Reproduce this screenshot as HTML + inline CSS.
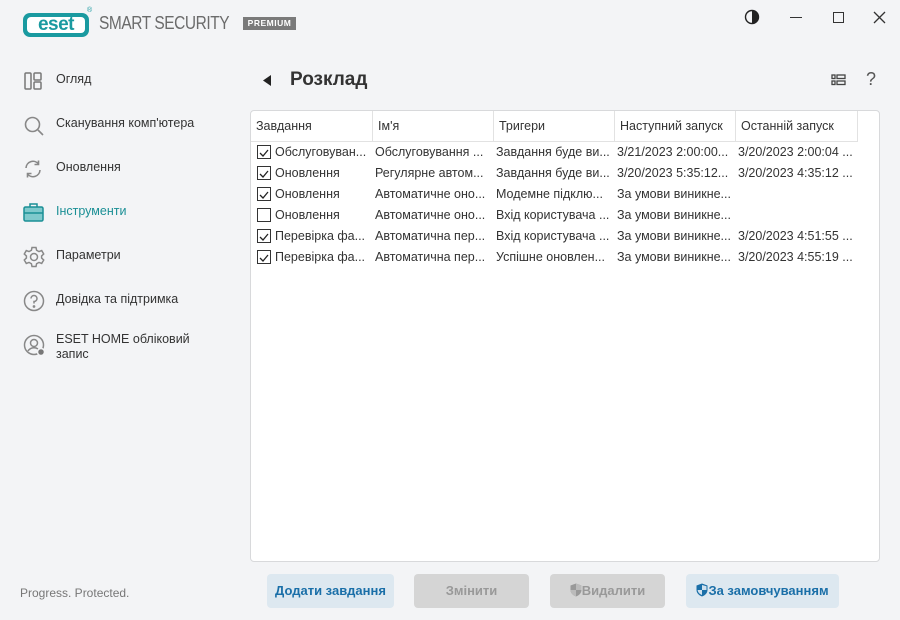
<!DOCTYPE html>
<html><head><meta charset="utf-8"><style>
*{margin:0;padding:0;box-sizing:border-box}
body{width:900px;height:620px;background:#f3f4f6;font-family:"Liberation Sans","DejaVu Sans",sans-serif;position:relative;overflow:hidden;color:#2b2b2b}
.a{position:absolute}
.nav{position:absolute;left:56px;font-size:12.5px;color:#333}
.ic{position:absolute;left:23px}
.panel{position:absolute;left:250px;top:110px;width:630px;height:452px;background:#fff;border:1px solid #d8d9db;border-radius:4px;overflow:hidden}
.hd{position:absolute;top:0;height:31px;border-right:1px solid #e2e2e2;border-bottom:1px solid #e2e2e2;font-size:12.5px;line-height:31px;padding-left:5px;color:#333}
.c{position:absolute;font-size:12.5px;white-space:nowrap;overflow:hidden;color:#333;height:18px;line-height:18px}
.cb{position:absolute;left:7px;width:14px;height:14px;border:1px solid #333;background:#fff}
.btn{position:absolute;top:574px;height:34px;border-radius:4px;font-size:13px;font-weight:bold;line-height:34px;text-align:center}
</style></head><body>
<!-- logo -->
<div class="a" style="left:23px;top:13px;width:66px;height:24px;border-radius:7px;background:#1a9aa0;"></div>
<div class="a" style="left:27px;top:17px;width:58px;height:16px;border-radius:4px;background:#fff;"></div>
<div class="a" style="left:27px;top:13px;width:58px;height:24px;color:#1a9aa0;font-weight:bold;font-size:19px;line-height:24px;text-align:center;letter-spacing:-0.5px">eset</div>
<div class="a" style="left:87px;top:7px;font-size:7px;color:#1a9aa0">®</div>
<div class="a" style="left:99px;top:13px;font-size:18px;color:#6b6b6b;letter-spacing:-0.5px;white-space:nowrap;transform:scaleX(0.86);transform-origin:left">SMART SECURITY</div>
<div class="a" style="left:243px;top:17px;width:53px;height:13px;background:#7a7a7a;color:#fff;font-size:8.5px;font-weight:bold;line-height:13px;text-align:center;letter-spacing:0.5px">PREMIUM</div>
<!-- window controls -->
<svg class="a" style="left:744px;top:9px" width="16" height="16"><circle cx="8" cy="8" r="6.5" fill="none" stroke="#222" stroke-width="1.4"/><path d="M8 1.5A6.5 6.5 0 0 1 8 14.5Z" fill="#222"/></svg>
<div class="a" style="left:790px;top:17px;width:12px;height:1.3px;background:#333"></div>
<div class="a" style="left:833px;top:12px;width:11px;height:11px;border:1.3px solid #333"></div>
<svg class="a" style="left:873px;top:11px" width="13" height="13"><path d="M1 1L12 12M12 1L1 12" stroke="#333" stroke-width="1.3"/></svg>
<!-- sidebar -->
<svg class="ic" style="top:71px" width="20" height="20" fill="none" stroke="#777" stroke-width="1.5"><rect x="2" y="2" width="6" height="16" rx="1"/><rect x="11" y="2" width="7" height="7" rx="1"/><rect x="11" y="11" width="7" height="7" rx="1"/></svg>
<div class="nav" style="top:72px">Огляд</div>
<svg class="ic" style="top:115px" width="22" height="22" fill="none" stroke="#888" stroke-width="1.6"><circle cx="9.5" cy="9.5" r="7"/><path d="M15 15L20 20"/></svg>
<div class="nav" style="top:116px">Сканування комп'ютера</div>
<svg class="ic" style="top:159px" width="20" height="20" fill="none" stroke="#888" stroke-width="1.6"><path d="M3 9A7 7 0 0 1 15.5 5M17 11A7 7 0 0 1 4.5 15"/><path d="M15.5 1.5V5.5H11.5M4.5 18.5V14.5H8.5"/></svg>
<div class="nav" style="top:160px">Оновлення</div>
<svg class="ic" style="top:202px" width="22" height="20"><rect x="1" y="5" width="19" height="14" rx="1.5" fill="#7fc9cc" stroke="#1a8f95" stroke-width="1.5"/><path d="M7 5V2H14V5" fill="none" stroke="#1a8f95" stroke-width="1.5"/><path d="M1 11H20" stroke="#1a8f95" stroke-width="1.5"/></svg>
<div class="nav" style="top:204px;color:#1a8f95">Інструменти</div>
<svg class="ic" style="top:246px" width="22" height="22" fill="none" stroke="#888" stroke-width="1.5"><path d="M9 1.5H13L13.6 4.3L16 5.6L18.7 4.6L20.7 8L18.6 10V12L20.7 14L18.7 17.4L16 16.4L13.6 17.7L13 20.5H9L8.4 17.7L6 16.4L3.3 17.4L1.3 14L3.4 12V10L1.3 8L3.3 4.6L6 5.6L8.4 4.3Z"/><circle cx="11" cy="11" r="3.5"/></svg>
<div class="nav" style="top:248px">Параметри</div>
<svg class="ic" style="top:290px" width="22" height="22" fill="none" stroke="#888" stroke-width="1.5"><circle cx="11" cy="11" r="9.5"/><path d="M8 8.5A3 3 0 1 1 11 11.5V13.5"/><circle cx="11" cy="16.5" r="0.6" fill="#888"/></svg>
<div class="nav" style="top:292px">Довідка та підтримка</div>
<svg class="ic" style="top:334px" width="24" height="24" fill="none" stroke="#888" stroke-width="1.5"><circle cx="11" cy="11" r="9.5"/><circle cx="11" cy="9" r="3.5"/><path d="M5 17A7 7 0 0 1 15 15"/><circle cx="18" cy="18" r="3.5" fill="#777" stroke="#f3f4f6"/></svg>
<div class="nav" style="top:332px;line-height:15px">ESET HOME обліковий<br>запис</div>
<div class="a" style="left:20px;top:586px;font-size:12px;color:#777">Progress. Protected.</div>
<!-- title -->
<svg class="a" style="left:263px;top:75px" width="9" height="11"><path d="M8 0V11L0 5.5Z" fill="#222"/></svg>
<div class="a" style="left:290px;top:69px;font-size:19px;font-weight:bold;color:#333">Розклад</div>
<svg class="a" style="left:831px;top:74px" width="15" height="12" fill="none" stroke="#444" stroke-width="1.3"><rect x="1" y="1" width="3" height="3.5"/><rect x="1" y="7" width="3" height="3.5"/><rect x="6" y="1" width="8" height="3.5"/><rect x="6" y="7" width="8" height="3.5"/></svg>
<div class="a" style="left:866px;top:69px;font-size:18px;color:#555">?</div>
<!-- table -->
<div class="panel">
<div class="hd" style="left:0;width:122px">Завдання</div>
<div class="hd" style="left:122px;width:121px">Ім'я</div>
<div class="hd" style="left:243px;width:121px">Тригери</div>
<div class="hd" style="left:364px;width:121px">Наступний запуск</div>
<div class="hd" style="left:485px;width:122px">Останній запуск</div>
</div>
<div class="a" style="left:250px;top:141px;width:630px;height:130px">
<div class="cb" style="top:4px"><svg width="12" height="12"><path d="M2 6L5 9L10 3" fill="none" stroke="#222" stroke-width="1.3"/></svg></div>
<div class="cb" style="top:25px"><svg width="12" height="12"><path d="M2 6L5 9L10 3" fill="none" stroke="#222" stroke-width="1.3"/></svg></div>
<div class="cb" style="top:46px"><svg width="12" height="12"><path d="M2 6L5 9L10 3" fill="none" stroke="#222" stroke-width="1.3"/></svg></div>
<div class="cb" style="top:67px"></div>
<div class="cb" style="top:88px"><svg width="12" height="12"><path d="M2 6L5 9L10 3" fill="none" stroke="#222" stroke-width="1.3"/></svg></div>
<div class="cb" style="top:109px"><svg width="12" height="12"><path d="M2 6L5 9L10 3" fill="none" stroke="#222" stroke-width="1.3"/></svg></div>
</div>
<div class="a" style="left:275px;top:143px">
<div class="c" style="top:0;width:96px">Обслуговуван...</div>
<div class="c" style="top:21px;width:96px">Оновлення</div>
<div class="c" style="top:42px;width:96px">Оновлення</div>
<div class="c" style="top:63px;width:96px">Оновлення</div>
<div class="c" style="top:84px;width:96px">Перевірка фа...</div>
<div class="c" style="top:105px;width:96px">Перевірка фа...</div>
</div>
<div class="a" style="left:375px;top:143px">
<div class="c" style="top:0;width:117px">Обслуговування ...</div>
<div class="c" style="top:21px;width:117px">Регулярне автом...</div>
<div class="c" style="top:42px;width:117px">Автоматичне оно...</div>
<div class="c" style="top:63px;width:117px">Автоматичне оно...</div>
<div class="c" style="top:84px;width:117px">Автоматична пер...</div>
<div class="c" style="top:105px;width:117px">Автоматична пер...</div>
</div>
<div class="a" style="left:496px;top:143px">
<div class="c" style="top:0;width:117px">Завдання буде ви...</div>
<div class="c" style="top:21px;width:117px">Завдання буде ви...</div>
<div class="c" style="top:42px;width:117px">Модемне підклю...</div>
<div class="c" style="top:63px;width:117px">Вхід користувача ...</div>
<div class="c" style="top:84px;width:117px">Вхід користувача ...</div>
<div class="c" style="top:105px;width:117px">Успішне оновлен...</div>
</div>
<div class="a" style="left:617px;top:143px">
<div class="c" style="top:0;width:117px">3/21/2023 2:00:00...</div>
<div class="c" style="top:21px;width:117px">3/20/2023 5:35:12...</div>
<div class="c" style="top:42px;width:117px">За умови виникне...</div>
<div class="c" style="top:63px;width:117px">За умови виникне...</div>
<div class="c" style="top:84px;width:117px">За умови виникне...</div>
<div class="c" style="top:105px;width:117px">За умови виникне...</div>
</div>
<div class="a" style="left:738px;top:143px">
<div class="c" style="top:0;width:120px">3/20/2023 2:00:04 ...</div>
<div class="c" style="top:21px;width:120px">3/20/2023 4:35:12 ...</div>
<div class="c" style="top:84px;width:120px">3/20/2023 4:51:55 ...</div>
<div class="c" style="top:105px;width:120px">3/20/2023 4:55:19 ...</div>
</div>
<!-- buttons -->
<div class="btn" style="left:267px;width:127px;background:#dde8f0;color:#1a6fa8">Додати завдання</div>
<div class="btn" style="left:414px;width:115px;background:#d5d5d5;color:#999">Змінити</div>
<div class="btn" style="left:550px;width:115px;background:#d5d5d5;color:#999"><svg width="12" height="14" style="vertical-align:-2px"><path d="M6 0.5L11.5 2.5V7C11.5 10 9 12.5 6 13.5C3 12.5 0.5 10 0.5 7V2.5Z" fill="#999"/><path d="M6 0.5V7H11.5V2.5ZM6 7V13.5C3 12.5 0.5 10 0.5 7Z" fill="#bbb"/></svg>Видалити</div>
<div class="btn" style="left:686px;width:153px;background:#dde8f0;color:#1a6fa8"><svg width="12" height="14" style="vertical-align:-2px"><path d="M6 0.5L11.5 2.5V7C11.5 10 9 12.5 6 13.5C3 12.5 0.5 10 0.5 7V2.5Z" fill="#1a6fa8"/><path d="M6 2V7H10.5V3.2ZM6 7V12C3.5 11 2 9.5 1.6 7Z" fill="#cfe1ee"/></svg>За замовчуванням</div>
</body></html>
